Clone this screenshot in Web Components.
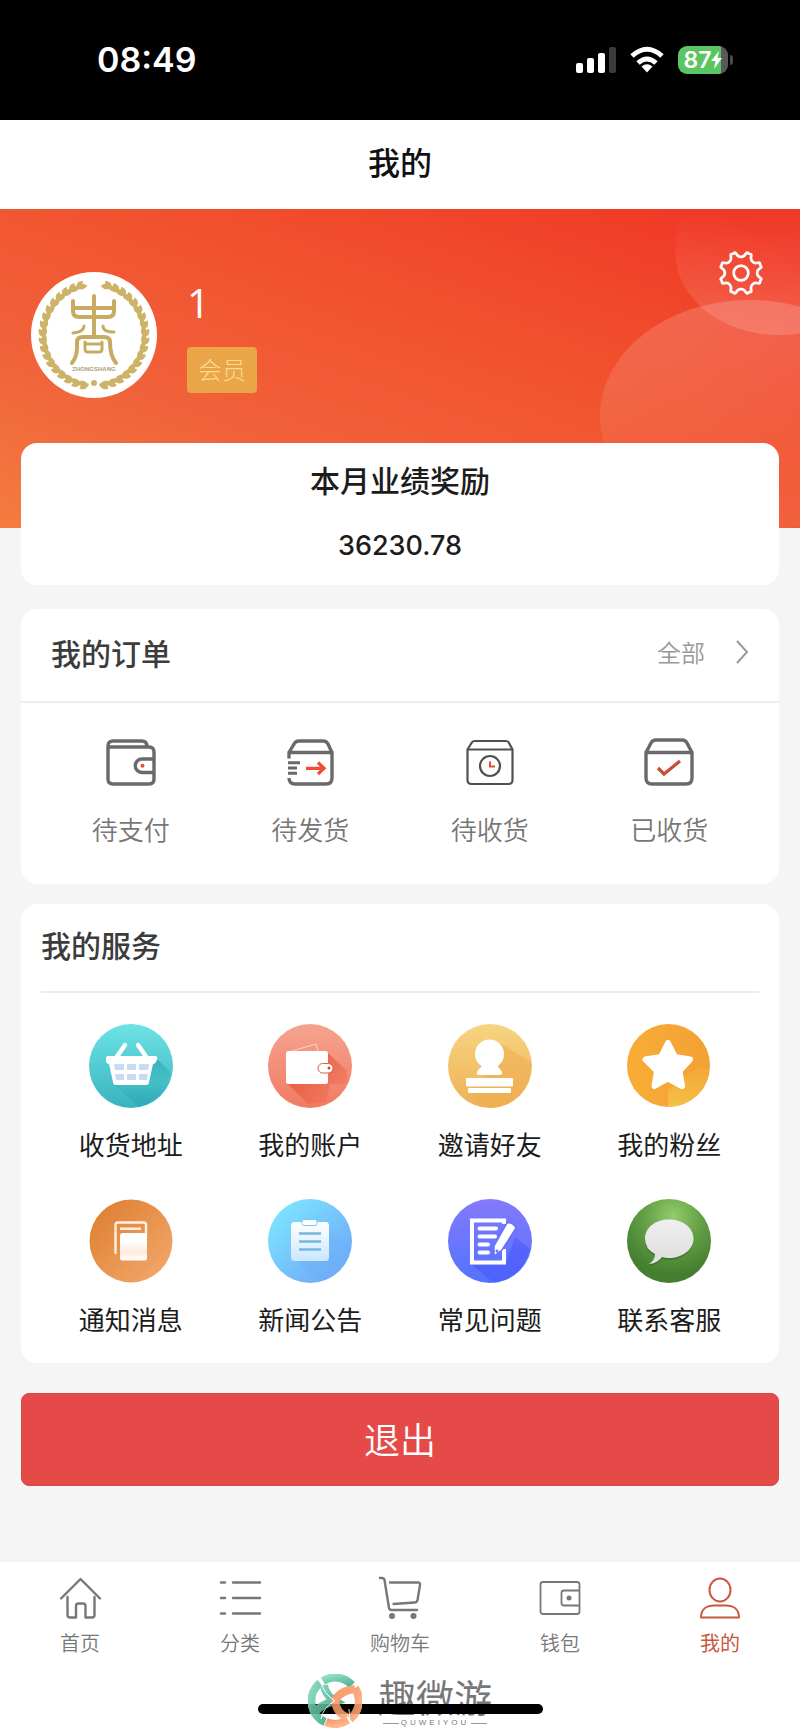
<!DOCTYPE html>
<html lang="zh-CN">
<head>
<meta charset="UTF-8">
<meta name="viewport" content="width=device-width, initial-scale=1">
<title>我的</title>
<style>
    body {
        margin: 0;
        min-height: 100vh;
        background: #f5f5f5;
        color: #1c1c1c;
        font-family: "Noto Sans CJK SC", sans-serif;
        --card: #fff;
        --line: #ededed;
        --muted: #777;
        --accent: #c95741;
    }
</style>
</head>
<body>
<mine-page></mine-page>

<script>
// =============================================
// Iconos
// =============================================

// Engranaje de 8 dientes redondeados
function gearPath(c, inner, outer) {
    let d = '';
    for (let i = 0; i < 8; i++) {
        const pt = (deg, r) => {
            const a = (i * 45 + deg) * Math.PI / 180;
            return (c + r * Math.cos(a)).toFixed(2) + ' ' + (c + r * Math.sin(a)).toFixed(2);
        };
        d += (i ? 'L' : 'M') + pt(-14, outer - 1);
        d += 'Q' + pt(-10, inner) + ' ' + pt(0, inner);
        d += 'Q' + pt(10, inner) + ' ' + pt(14, outer - 1);
        d += 'Q' + pt(16, outer + 1) + ' ' + pt(20, outer);
        d += 'L' + pt(25, outer) + 'Q' + pt(29, outer + 1) + ' ' + pt(31, outer - 1);
    }
    return d + 'Z';
}

// Corona de hojas alrededor del avatar
function wreath() {
    let out = '';
    for (let a = 7; a <= 164; a += 9) {
        const leaf = `
            <path d="M0 0q-5-6 1-12q6 6-1 12" transform="rotate(${-a} 63 63) translate(62 114) rotate(72)"/>
            <path d="M0 0q-5-6 1-12q6 6-1 12" transform="rotate(${-a} 63 63) translate(62 112) rotate(118) scale(.9)"/>`;
        out += leaf + `<g transform="matrix(-1 0 0 1 126 0)">${leaf}</g>`;
    }
    return out;
}

const ICONS = {
    gear: ['0 0 44 44', `
        <g fill="none" stroke="#fff" stroke-width="2.6" stroke-linejoin="round">
            <path d="${gearPath(22, 15.5, 20)}"/><circle cx="22" cy="22" r="7"/>
        </g>`],
    chevron: ['0 0 14 24', '<path d="M2 1L12 12L2 23" fill="none" stroke="#999" stroke-width="2"/>'],

    // Pedidos
    unpaid: ['0 0 56 56', `
        <g fill="none" stroke="#696969" stroke-width="3.4" stroke-linejoin="round">
            <path d="M5 12V44q0 5 5 5H46q5 0 5-5V17q0-5-5-5H5V11q0-5 5-5H39q5 0 5 6"/>
            <path d="M51 24H39a6.5 6.5 0 0 0 0 13.5H51"/>
        </g><circle cx="39.5" cy="30.7" r="2" fill="#e8502f"/>`],
    unsent: ['0 0 56 56', `
        <g fill="none" stroke="#696969" stroke-width="3.4" stroke-linejoin="round">
            <path d="M7 23.5V17.5H50V43q0 6-6 6H13q-6 0-6-6"/>
            <path d="M7 17.5L12 9q1.5-3 5-3H41q3.5 0 5 3L50 17.5"/>
            <path d="M6 27.700H18M6 33H15M6 38.3H15" stroke-width="3"/>
        </g>
        <path d="M24 33.3H41M36 27.5L42 33.3L36 39" fill="none" stroke="#ed4e2d" stroke-width="3.2"/>`],
    incoming: ['0 0 56 56', `
        <g fill="none" stroke="#505050" stroke-width="2.2" stroke-linejoin="round">
            <path d="M5.5 14.5H50.5V45q0 4-4 4H9.500q-4 0-4-4Z"/>
            <path d="M5.5 14.5L9.500 8q1-2 3-2H44q2 0 3 2L50.5 14.5"/>
            <circle cx="28" cy="31" r="10"/>
        </g><path d="M28 26.5V31.5H33" fill="none" stroke="#df4e30" stroke-width="2"/>`],
    received: ['0 0 56 56', `
        <g fill="none" stroke="#696969" stroke-width="3.4" stroke-linejoin="round">
            <path d="M5 17.5H51V43q0 6-6 6H11q-6 0-6-6Z"/>
            <path d="M5 17.5L10 8q1.5-3 5-3H41q3.500 0 5 3L51 17.5"/>
        </g><path d="M17 33L23 39L39 26" fill="none" stroke="#c84f32" stroke-width="3.2"/>`],

    // Servicios
    basket: ['0 0 84 84', `
        <defs><linearGradient id="g" x2="0" y2="1"><stop stop-color="#6de3e5"/><stop offset="1" stop-color="#39b3bf"/></linearGradient>
        <linearGradient id="s" x2="0" y2="1"><stop stop-color="#259fae" stop-opacity=".6"/><stop offset=".5" stop-color="#259fae" stop-opacity=".1"/><stop offset="1" stop-color="#259fae" stop-opacity=".5"/></linearGradient></defs>
        <circle cx="42" cy="42" r="42" fill="url(#g)"/>
        <path d="M69 36L82 49A42 42 0 0 1 50 83L24 60Z" fill="url(#s)"/>
        <path d="M36 21L27 34M49 21L58 34" stroke="#fff" stroke-width="4.5" stroke-linecap="round"/>
        <path d="M19 32H66q3 0 2 3l-1 3q-1 2-3 2L60 58q0 3-3 3H27q-3 0-3-3L20 40q-2 0-3-2v-3q0-3 2-3" fill="#fff"/>
        <path d="M25 40h10v6H26zM38 40h9v6h-9zM50 40h10l-1 6h-9zM26 50h9v6h-8zM38 50h9v6h-9zM50 50h9l-1 6h-8z" fill="#c8dcf3"/>`],
    account: ['0 0 84 84', `
        <defs><linearGradient id="g" x2="0" y2="1"><stop stop-color="#f5a48f"/><stop offset="1" stop-color="#f27a63"/></linearGradient>
        <linearGradient id="s" x2="1" y2="1"><stop stop-color="#e03a20" stop-opacity=".8"/><stop offset="1" stop-color="#e8482d" stop-opacity="0"/></linearGradient></defs>
        <circle cx="42" cy="42" r="42" fill="url(#g)"/>
        <path d="M60 29L79 47V60H60ZM20 60H62L58 78L40 80Z" fill="url(#s)"/>
        <path d="M24 27L48 20L50 27" fill="none" stroke="#fbd4c9"/>
        <rect x="18" y="27" width="42" height="33" rx="2.5" fill="#fff"/>
        <rect x="50" y="39.5" width="15" height="9.5" rx="4.7" fill="#fff" stroke="#c9634d"/>
        <circle cx="61" cy="44" r="1.5" fill="#d9452e"/>`],
    invite: ['0 0 84 84', `
        <defs><linearGradient id="g" x2="0" y2="1"><stop stop-color="#f8d481"/><stop offset="1" stop-color="#edb055"/></linearGradient></defs>
        <circle cx="42" cy="42" r="42" fill="url(#g)"/>
        <path d="M53 20L83 38A42 42 0 0 1 42 84L22 68L40 50Z" fill="#f0ac4d" opacity=".5"/>
        <g fill="#fff"><circle cx="41.5" cy="30" r="14.5"/>
        <path d="M33 38q2 5-2 7q-5 6 1 6H51q6 0 1-6q-3-2-2-7z"/>
        <rect x="18" y="54" width="47" height="8.5" rx="1"/><rect x="20" y="64" width="43" height="5" rx="1"/></g>`],
    fans: ['0 0 84 84', `
        <defs><linearGradient id="g" x2="1"><stop stop-color="#f8ad36"/><stop offset="1" stop-color="#f3a034"/></linearGradient>
        <linearGradient id="s" x2="0" y2="1"><stop stop-color="#f4b43c" stop-opacity=".4"/><stop offset="1" stop-color="#f4c248"/></linearGradient></defs>
        <circle cx="41.500" cy="41.500" r="41.5" fill="url(#g)"/>
        <path d="M58 52L74 43L82 46A41 41 0 0 1 41 83V66Z" fill="url(#s)"/>
        <path d="M41 19L48 33L63 35.5L52.5 47L55 62L41 54.5L27.5 62L30 47L18.5 35.5L34 33Z" fill="#fff" stroke="#fff" stroke-width="6" stroke-linejoin="round"/>`],
    notice: ['0 0 84 84', `
        <defs><linearGradient id="g" x2="1" y2="1"><stop stop-color="#dd7c2d"/><stop offset="1" stop-color="#f3ab70"/></linearGradient>
        <linearGradient id="p" x2="0" y2="1"><stop stop-color="#fff"/><stop offset=".3" stop-color="#fff"/><stop offset=".7" stop-color="#ffe9dc"/><stop offset="1" stop-color="#fff"/></linearGradient></defs>
        <circle cx="42" cy="42" r="41.5" fill="url(#g)"/>
        <path d="M26.5 54V26q0-2.500 2.500-2.500H54.5q2.500 0 2.500 2.500V38" fill="none" stroke="#fff0e3" stroke-width="2.4" stroke-linecap="round"/>
        <rect x="31" y="28.5" width="21" height="2.5" fill="#fff0e3"/>
        <rect x="31" y="34" width="27" height="27.5" rx="2.5" fill="url(#p)"/>`],
    news: ['0 0 84 84', `
        <defs><linearGradient id="g" x2="1" y2="1"><stop stop-color="#7fecff"/><stop offset="1" stop-color="#6c9ff7"/></linearGradient>
        <linearGradient id="p" x2="0" y2="1"><stop stop-color="#fff"/><stop offset="1" stop-color="#cbe6ff"/></linearGradient></defs>
        <circle cx="42" cy="42" r="42" fill="url(#g)"/>
        <path d="M60 30L83 48A42 42 0 0 1 50 83L28 62H60Z" fill="#6cb2f7" opacity=".4"/>
        <rect x="23" y="23" width="38" height="39" rx="3.5" fill="url(#p)"/>
        <rect x="34" y="20.5" width="15" height="6" rx="2" fill="#fff" stroke="#7bc9ee"/>
        <path d="M31 34.5H53M31 42.5H53M31 50.5H53" stroke="#75b6df" stroke-width="2.5"/>`],
    faq: ['0 0 84 84', `
        <defs><linearGradient id="g" x2="0" y2="1"><stop stop-color="#8579fb"/><stop offset="1" stop-color="#5273ff"/></linearGradient></defs>
        <circle cx="42" cy="42" r="42" fill="url(#g)"/>
        <path d="M67 38L82 50A42 42 0 0 1 46 84L24 66H57Z" fill="#464dfa" opacity=".45"/>
        <path d="M56 25V21.5H24V63.5H56V50" fill="none" stroke="#fff" stroke-width="4"/>
        <path d="M31.5 29.5H48M31.5 37.5H47M31.5 45.5H40M31.5 53.5H40" stroke="#fff" stroke-width="4" stroke-linecap="round"/>
        <path d="M59 24q6-1 9 5L54 51L46 57L46 47Z" fill="#fff" stroke="#6870fa" stroke-width="1.5" stroke-linejoin="round"/>
        <circle cx="49" cy="52" r="1.5" fill="#6870fa"/>`],
    support: ['0 0 84 84', `
        <defs><radialGradient id="g" cx=".55" cy=".2" r=".7"><stop stop-color="#93cc6c"/><stop offset=".5" stop-color="#639f45"/><stop offset="1" stop-color="#447e2f"/></radialGradient>
        <linearGradient id="p" x2="0" y2="1"><stop stop-color="#efefef"/><stop offset="1" stop-color="#dedede"/></linearGradient></defs>
        <circle cx="42" cy="42" r="42" fill="url(#g)"/>
        <path d="M42 22C55.5 22 66 30.5 66 41.5C66 53 55 61 42 61Q38 61 35 60Q30 66.5 22 66.5Q28 63 28 57Q18 52 18 41.5C18 30.5 28.5 22 42 22Z" fill="#2f6323" opacity=".5"/>
        <path d="M42 20.500C55.5 20.500 66.500 28.5 66.500 39.5C66.500 51 55 59 42 59Q38 59 35 58Q30 64.5 22 65Q28 61 28 55Q18 50 18 39.5C18 28.5 28.5 20.500 42 20.500Z" fill="url(#p)"/>`],

    // Barra inferior
    home: ['0 0 44 44', `
        <g fill="none" stroke="currentColor" stroke-width="2.4" stroke-linecap="round" stroke-linejoin="round">
            <path d="M3 23.5L22.5 4L42 23.5"/>
            <path d="M9.5 22V40q0 2.500 2.500 2.500H18V31q0-2.500 2.500-2.500H25q2.500 0 2.500 2.500V42.5H34q2.500 0 2.500-2.500V22"/>
        </g>`],
    list: ['0 0 44 44', `
        <path d="M3 7.5H7M15 7.5H42M3 23H7M15 23H42M3 38.5H7M15 38.5H42" stroke="currentColor" stroke-width="2.4" stroke-linecap="round"/>`],
    cart: ['0 0 44 44', `
        <g fill="none" stroke="currentColor" stroke-width="2.4" stroke-linecap="round" stroke-linejoin="round">
            <path d="M2 3H4q2 0 2.500 2L11 33q.5 2 2.500 2H39"/>
            <path d="M12 7.5H40q2.500 0 2 2.500L39.5 25q-.5 2.500-3 2.500L15.5 29"/>
        </g>
        <circle cx="14" cy="41" r="3" fill="currentColor"/><circle cx="35.5" cy="41" r="3" fill="currentColor"/>`],
    wallet: ['0 0 44 44', `
        <g fill="none" stroke="currentColor" stroke-width="1.8">
            <rect x="2.5" y="7" width="39" height="32" rx="2.5"/>
            <path d="M41.5 15.5H26q-2.500 0-2.500 2.500V28q0 2.500 2.500 2.500H41.5"/>
        </g><circle cx="31" cy="23" r="2.5" fill="currentColor"/>`],
    user: ['0 0 44 44', `
        <g fill="none" stroke="currentColor" stroke-width="2" stroke-linejoin="round">
            <ellipse cx="22" cy="15" rx="10.5" ry="11.5"/>
            <path d="M3 42.5H41C41 34 35 30.5 28 30.5H16C9 30.5 3 34 3 42.5Z"/>
        </g>`],

    emblem: ['0 0 126 126', `
        <circle cx="63" cy="63" r="63" fill="#fff"/>
        <g fill="#cdb368">${wreath()}<circle cx="63" cy="111" r="3"/></g>
        <g fill="none" stroke="#c8ab60" stroke-width="4" stroke-linecap="round" stroke-linejoin="round">
            <path d="M63 24V63M42 29V39q0 6 6 6H77q6 0 6-6V29M43 36H82"/>
            <path d="M53 54q0 6-11 7M72 54q0 6 11 6" stroke-width="3"/>
            <path d="M41 91Q47 84 46 70q0-5 6-5H73q6 0 6 5Q79 84 85 91"/>
            <path d="M54 70V77q0 3 3 3H68q3 0 3-3V70M54 72H71" stroke-width="3"/>
        </g>
        <text x="63" y="99" text-anchor="middle" font-family="Liberation Sans" font-weight="700" font-size="6" fill="#a8a06f">ZHONGSHANG</text>`],
};

class AppIcon extends HTMLElement {
    constructor() {
        super();
        this.attachShadow({ mode: 'open' });
    }

    connectedCallback() {
        const [box, body] = ICONS[this.getAttribute('name')];
        this.shadowRoot.innerHTML = `
            <style>
                :host { display: block; flex: none; }
                svg { display: block; width: 100%; height: 100%; }
            </style>
            <svg viewBox="${box}" aria-hidden="true">${body}</svg>
        `;
    }
}
customElements.define('app-icon', AppIcon);

// =============================================
// Barra de estado
// =============================================

class StatusBar extends HTMLElement {
    constructor() {
        super();
        this.attachShadow({ mode: 'open' }).innerHTML = `
            <style>
                :host {
                    display: flex;
                    align-items: center;
                    justify-content: space-between;
                    height: 120px;
                    box-sizing: border-box;
                    padding: 0 67px 0 97px;
                    background: #000;
                    color: #fff;
                    font-family: Inter, "Noto Sans CJK SC", sans-serif;
                    font-weight: 600;
                }
                time { font-size: 34px; line-height: 40px; }
                .signals { display: flex; align-items: center; gap: 14px; }
                svg { display: block; }
                .battery { display: flex; align-items: center; gap: 2px; }
                .level {
                    display: flex;
                    align-items: center;
                    justify-content: center;
                    width: 50px;
                    height: 28px;
                    border-radius: 9px;
                    background: linear-gradient(90deg, #5ac561 87%, #59595b 87%);
                    font-size: 23px;
                }
                .nub { width: 3px; height: 10px; border-radius: 0 3px 3px 0; background: #4a4a4c; }
            </style>
            <time>08:49</time>
            <div class="signals">
                <svg width="40" height="28" viewBox="0 0 40 28">
                    <g fill="#fff"><rect y="17" width="7" height="10" rx="2"/><rect x="11" y="12" width="7" height="15" rx="2"/><rect x="22" y="7" width="7" height="20" rx="2"/></g>
                    <rect x="33" y="1" width="7" height="26" rx="2" fill="#3a3a3c"/>
                </svg>
                <svg width="34" height="28" viewBox="0 0 34 28">
                    <g fill="none" stroke="#fff" stroke-width="5"><path d="M2 10Q17-3.500 32 10"/><path d="M8 17Q17 9 26 17"/></g>
                    <path d="M11.5 20.5Q17 16 22.5 20.5L17 26.5Z" fill="#fff"/>
                </svg>
                <div class="battery">
                    <div class="level"><span>87</span>
                        <svg width="11" height="18" viewBox="0 0 11 18"><path d="M8 0L0 10H4.5L3 18L11 7H6.5Z" fill="#fff"/></svg>
                    </div>
                    <div class="nub"></div>
                </div>
            </div>
        `;
    }
}
customElements.define('status-bar', StatusBar);

class NavTitle extends HTMLElement {
    constructor() {
        super();
        this.attachShadow({ mode: 'open' }).innerHTML = `
            <style>
                :host { display: block; background: #fff; padding: 19px 0 25px; text-align: center; color: #111; }
                h1 { margin: 0; font-size: 32px; line-height: 45px; font-weight: 500; }
            </style>
            <h1><slot></slot></h1>
        `;
    }
}
customElements.define('nav-title', NavTitle);

// =============================================
// Cabecera con el perfil
// =============================================

class ProfileHero extends HTMLElement {
    constructor() {
        super();
        this.attachShadow({ mode: 'open' }).innerHTML = `
            <style>
                :host {
                    display: grid;
                    background: linear-gradient(20deg, #f37c40 0%, #f1623a 30%, #f1522e 60%, #f03826 95%);
                    color: #fff;
                }
                .bubbles, .profile { grid-area: 1 / 1; }
                .bubbles { justify-self: end; display: block; width: 200px; height: 319px; }
                .profile { display: flex; align-items: flex-start; padding: 63px 36px 130px 31px; }
                .avatar { width: 126px; height: 126px; margin-right: 30px; }
                .who { flex: 1; display: flex; flex-direction: column; align-items: flex-start; gap: 22px; padding-top: 8px; }
                .name { font-family: "Open Sans", sans-serif; font-size: 40px; line-height: 45px; font-weight: 400; }
                .badge {
                    padding: 0 11px 2px;
                    border-radius: 4px;
                    background: #e9a548;
                    color: #fbdc8c;
                    font-size: 24px;
                    line-height: 44px;
                    font-weight: 300;
                }
                button { padding: 0; border: 0; background: none; margin-top: -22px; }
                .gear { width: 46px; height: 46px; }
            </style>
            <svg class="bubbles" viewBox="0 0 200 319" aria-hidden="true">
                <defs>
                    <linearGradient id="up" x2="0" y2="1"><stop offset=".25" stop-color="#fff" stop-opacity="0"/><stop offset="1" stop-color="#fff" stop-opacity=".16"/></linearGradient>
                    <linearGradient id="low" x2="0" y2="1"><stop stop-color="#fff" stop-opacity=".18"/><stop offset=".7" stop-color="#fff" stop-opacity=".05"/></linearGradient>
                </defs>
                <ellipse cx="178" cy="42" rx="103" ry="84" fill="url(#up)"/>
                <ellipse cx="150" cy="207" rx="150" ry="116" fill="url(#low)"/>
            </svg>
            <div class="profile">
                <app-icon class="avatar" name="emblem"></app-icon>
                <div class="who">
                    <div class="name"><slot name="name"></slot></div>
                    <div class="badge"><slot name="level"></slot></div>
                </div>
                <button aria-label="设置"><app-icon class="gear" name="gear"></app-icon></button>
            </div>
        `;
    }
}
customElements.define('profile-hero', ProfileHero);

// =============================================
// Tarjetas
// =============================================

class RewardCard extends HTMLElement {
    constructor() {
        super();
        this.attachShadow({ mode: 'open' }).innerHTML = `
            <style>
                :host {
                    display: block;
                    padding: 17px 20px 20px;
                    border-radius: 16px;
                    background: var(--card);
                    text-align: center;
                }
                h2 { margin: 0 0 29px; font-size: 30px; line-height: 38px; font-weight: 500; }
                .amount { font: 500 27px/38px Inter, sans-serif; }
            </style>
            <h2><slot></slot></h2>
            <div class="amount"><slot name="amount"></slot></div>
        `;
    }
}
customElements.define('reward-card', RewardCard);

class SectionCard extends HTMLElement {
    constructor() {
        super();
        this.attachShadow({ mode: 'open' }).innerHTML = `
            <style>
                :host { display: block; border-radius: 16px; background: var(--card); }
                header {
                    display: flex;
                    align-items: center;
                    justify-content: space-between;
                    padding: 24px 30px 30px;
                    border-bottom: 2px solid var(--line);
                }
                h2 { margin: 0; color: #3c3c3c; font-size: 30px; line-height: 38px; font-weight: 500; }
                .grid {
                    display: grid;
                    grid-template-columns: repeat(4, 1fr);
                    row-gap: 36px;
                    padding: 32px 20px 36px;
                }
                :host([inset]) header { margin: 0 20px; padding: 21px 0 28px; }
                :host([inset]) .grid { padding: 31px 20px 25px; }
            </style>
            <header><h2><slot name="title"></slot></h2><slot name="more"></slot></header>
            <div class="grid"><slot></slot></div>
        `;
    }
}
customElements.define('section-card', SectionCard);

class MoreLink extends HTMLElement {
    constructor() {
        super();
        this.attachShadow({ mode: 'open' }).innerHTML = `
            <style>
                :host { display: block; }
                a {
                    display: flex;
                    align-items: center;
                    gap: 30px;
                    color: #999;
                    font-size: 24px;
                    line-height: 38px;
                    font-weight: 350;
                    text-decoration: none;
                }
                app-icon { width: 14px; height: 24px; }
            </style>
            <a href="#orders"><slot></slot><app-icon name="chevron"></app-icon></a>
        `;
    }
}
customElements.define('more-link', MoreLink);

// Entrada con icono y texto; size="large" para los servicios
class MenuEntry extends HTMLElement {
    constructor() {
        super();
        this.attachShadow({ mode: 'open' });
    }

    connectedCallback() {
        this.shadowRoot.innerHTML = `
            <style>
                :host { display: block; }
                a {
                    display: flex;
                    flex-direction: column;
                    align-items: center;
                    gap: 19px;
                    color: var(--muted);
                    font-size: 26px;
                    line-height: 38px;
                    font-weight: 350;
                    text-decoration: none;
                }
                app-icon { width: 56px; height: 56px; }
                :host([size="large"]) a { gap: 17px; color: #1c1c1c; font-weight: 400; }
                :host([size="large"]) app-icon { width: 84px; height: 84px; }
            </style>
            <a href="#${this.getAttribute('icon')}">
                <app-icon name="${this.getAttribute('icon')}"></app-icon>
                <slot></slot>
            </a>
        `;
    }
}
customElements.define('menu-entry', MenuEntry);

class LogoutButton extends HTMLElement {
    constructor() {
        super();
        this.attachShadow({ mode: 'open' }).innerHTML = `
            <style>
                :host { display: block; }
                button {
                    display: block;
                    width: 100%;
                    padding: 0 0 3px;
                    border: 1px solid #d94744;
                    border-radius: 8px;
                    background: #e54a48;
                    color: #fff;
                    font-family: inherit;
                    font-size: 36px;
                    line-height: 88px;
                    font-weight: 350;
                }
            </style>
            <button type="button"><slot></slot></button>
        `;
    }
}
customElements.define('logout-button', LogoutButton);

// =============================================
// Navegación inferior
// =============================================

class TabItem extends HTMLElement {
    constructor() {
        super();
        this.attachShadow({ mode: 'open' });
    }

    connectedCallback() {
        this.shadowRoot.innerHTML = `
            <style>
                :host { display: block; flex: 1; }
                a {
                    display: flex;
                    flex-direction: column;
                    align-items: center;
                    gap: 10px;
                    color: var(--muted);
                    font-size: 20px;
                    line-height: 28px;
                    font-weight: 350;
                    text-decoration: none;
                }
                :host([active]) a { color: var(--accent); font-weight: 400; }
                app-icon { width: 44px; height: 44px; }
            </style>
            <a href="#${this.getAttribute('icon')}">
                <app-icon name="${this.getAttribute('icon')}"></app-icon>
                <slot></slot>
            </a>
        `;
    }
}
customElements.define('tab-item', TabItem);

class TabBar extends HTMLElement {
    constructor() {
        super();
        this.attachShadow({ mode: 'open' }).innerHTML = `
            <style>
                :host { display: block; background: #fff; }
                nav { display: flex; padding-top: 13px; }
            </style>
            <nav><slot></slot></nav>
            <slot name="bottom"></slot>
        `;
    }
}
customElements.define('tab-bar', TabBar);

// Indicador de inicio con la marca superpuesta
class HomeIndicator extends HTMLElement {
    constructor() {
        super();
        this.attachShadow({ mode: 'open' }).innerHTML = `
            <style>
                :host { display: grid; justify-items: center; align-items: start; height: 74px; overflow: hidden; }
                .brand, .bar { grid-area: 1 / 1; }
                .brand { display: flex; align-items: flex-start; gap: 16px; padding-top: 17px; }
                .logo { display: block; width: 54px; height: 54px; position: relative; z-index: 2; opacity: .88; }
                .words { display: flex; flex-direction: column; align-items: center; color: #777; }
                .cn { font-size: 38px; line-height: 44px; font-weight: 400; }
                .en {
                    display: flex;
                    align-items: center;
                    gap: 2px;
                    font: 8px/10px "Liberation Sans", sans-serif;
                    letter-spacing: 3px;
                }
                .en::before, .en::after { content: ""; width: 16px; height: 1px; background: #999; }
                .bar { z-index: 1; width: 285px; height: 10px; margin-top: 47px; border-radius: 5px; background: #000; }
            </style>
            <div class="brand">
                <svg class="logo" viewBox="0 0 54 54" aria-hidden="true">
                    <defs>
                        <linearGradient id="t" x2="1" y2="1"><stop stop-color="#7fd8ba"/><stop offset="1" stop-color="#3fa58a"/></linearGradient>
                        <linearGradient id="o" x2="1" y2="1"><stop stop-color="#f58a58"/><stop offset="1" stop-color="#ffae7c"/></linearGradient>
                    </defs>
                    <g fill="none" stroke-width="8">
                        <path d="M12 9A23 23 0 0 0 17 48" stroke="url(#t)"/>
                        <path d="M15 7A23 23 0 0 1 44 11" stroke="url(#t)"/>
                        <path d="M16 11Q17 21 27 27Q14 30 7 38" stroke="url(#t)"/>
                        <path d="M47 14A23 23 0 0 1 42 45" stroke="url(#o)"/>
                        <path d="M18 48A23 23 0 0 0 40 46" stroke="url(#o)"/>
                        <path d="M47 15Q31 17 27 27Q29 40 39 43" stroke="url(#o)"/>
                    </g>
                    <path d="M13 8Q16 20 27 27M27 27Q15 33 13 45M41 35L42 49" fill="none" stroke="#fff" stroke-width="1"/>
                </svg>
                <div class="words">
                    <div class="cn">趣微游</div>
                    <div class="en"><span>QUWEIYOU</span></div>
                </div>
            </div>
            <div class="bar"></div>
        `;
    }
}
customElements.define('home-indicator', HomeIndicator);

// =============================================
// Página
// =============================================

class MinePage extends HTMLElement {
    constructor() {
        super();
        this.attachShadow({ mode: 'open' }).innerHTML = `
            <style>
                :host { display: flex; flex-direction: column; min-height: 100vh; }
                main { flex: 1; display: flex; flex-direction: column; padding: 0 21px 76px; margin-top: -85px; }
                reward-card { margin-bottom: 24px; }
                section-card { margin-bottom: 20px; }
                logout-button { margin-top: 10px; }
            </style>
            <status-bar></status-bar>
            <nav-title>我的</nav-title>
            <profile-hero>
                <span slot="name">1</span>
                <span slot="level">会员</span>
            </profile-hero>
            <main>
                <reward-card>本月业绩奖励<span slot="amount">36230.78</span></reward-card>
                <section-card>
                    <span slot="title">我的订单</span>
                    <more-link slot="more">全部</more-link>
                    <menu-entry icon="unpaid">待支付</menu-entry>
                    <menu-entry icon="unsent">待发货</menu-entry>
                    <menu-entry icon="incoming">待收货</menu-entry>
                    <menu-entry icon="received">已收货</menu-entry>
                </section-card>
                <section-card inset>
                    <span slot="title">我的服务</span>
                    <menu-entry size="large" icon="basket">收货地址</menu-entry>
                    <menu-entry size="large" icon="account">我的账户</menu-entry>
                    <menu-entry size="large" icon="invite">邀请好友</menu-entry>
                    <menu-entry size="large" icon="fans">我的粉丝</menu-entry>
                    <menu-entry size="large" icon="notice">通知消息</menu-entry>
                    <menu-entry size="large" icon="news">新闻公告</menu-entry>
                    <menu-entry size="large" icon="faq">常见问题</menu-entry>
                    <menu-entry size="large" icon="support">联系客服</menu-entry>
                </section-card>
                <logout-button>退出</logout-button>
            </main>
            <tab-bar>
                <tab-item icon="home">首页</tab-item>
                <tab-item icon="list">分类</tab-item>
                <tab-item icon="cart">购物车</tab-item>
                <tab-item icon="wallet">钱包</tab-item>
                <tab-item icon="user" active>我的</tab-item>
                <home-indicator slot="bottom"></home-indicator>
            </tab-bar>
        `;
    }
}
customElements.define('mine-page', MinePage);
</script>
</body>
</html>
